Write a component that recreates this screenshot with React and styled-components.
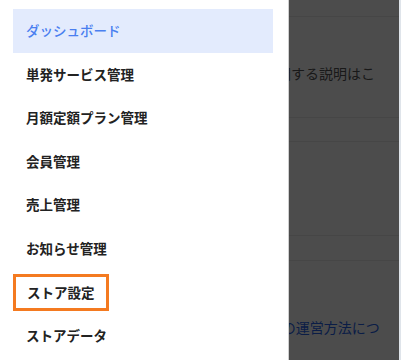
import React from 'react';
import styled, { createGlobalStyle } from 'styled-components';

const GlobalStyle = createGlobalStyle`
  html, body {
    margin: 0;
    padding: 0;
    background: #dfe4ea;
  }
  body {
    font-family: "Noto Sans CJK JP", "Noto Sans", sans-serif;
  }
`;

const menu = [
  'ダッシュボード',
  '単発サービス管理',
  '月額定額プラン管理',
  '会員管理',
  '売上管理',
  'お知らせ管理',
  'ストア設定',
  'ストアデータ',
];

const App = () => {
  return (
    <>
      <GlobalStyle />
      <Page>
        <TopBar />
        <Section $height={101}>
          <Description>
            このストアの基本設定とショップ情報に関する説明はここに表示されます。
          </Description>
        </Section>
        <Section $height={24} />
        <Section $height={94} />
        <Section $height={25} />
        <LinkBlock>
          <LinkText>
            はじめての方向けにオンラインストア全体の運営方法についてはこちらをご覧ください
          </LinkText>
        </LinkBlock>
      </Page>

      <Overlay />

      <Drawer>
        <MenuList>
          {menu.map((label, i) => (
            <MenuItem key={label} $active={i === 0} $marked={label === 'ストア設定'}>
              {label}
            </MenuItem>
          ))}
        </MenuList>
      </Drawer>
    </>
  );
};

export default App;

const Page = styled.div`
  display: flex;
  flex-direction: column;
  margin-right: 2px;
  height: 360px;
  background: #fff;
  overflow: hidden;
`;

const TopBar = styled.div`
  height: 16px;
  border-bottom: 1px solid #ececec;
`;

const Section = styled.div`
  box-sizing: border-box;
  height: ${(props) => props.$height}px;
  border-bottom: 1px solid #ececec;
`;

const Description = styled.p`
  margin: 0;
  padding: 46px 0 0 25px;
  width: 352px;
  font-size: 14px;
  line-height: 20px;
  color: #555;
`;

const LinkBlock = styled.div`
  padding: 56px 0 0 16px;
`;

const LinkText = styled.a`
  display: block;
  width: 366px;
  font-size: 14px;
  line-height: 20px;
  color: #2563eb;
`;

const Overlay = styled.div`
  position: fixed;
  top: 0;
  bottom: 0;
  left: 0;
  right: 2px;
  background: rgba(0, 0, 0, 0.7);
`;

const Drawer = styled.nav`
  position: fixed;
  top: 0;
  left: 0;
  bottom: 0;
  width: 288px;
  background: #fff;
  border-right: 1px solid #cfcfcf;
`;

const MenuList = styled.ul`
  list-style: none;
  margin: 0;
  padding: 9px 15px 0 13px;
  display: flex;
  flex-direction: column;
`;

const MenuItem = styled.li`
  padding: ${(props) => (props.$marked ? '6px 11px' : '12px 13px')};
  margin: ${(props) => (props.$marked ? '3px 0' : '0')};
  width: ${(props) => (props.$marked ? 'fit-content' : 'auto')};
  border: ${(props) => (props.$marked ? '3px solid #f47a20' : 'none')};
  font-size: 13.5px;
  line-height: 19.6px;
  font-weight: ${(props) => (props.$active ? 500 : 700)};
  color: ${(props) => (props.$active ? '#4a7ff0' : '#222')};
  background: ${(props) => (props.$active ? '#e3ebfd' : 'transparent')};
  white-space: nowrap;
`;
